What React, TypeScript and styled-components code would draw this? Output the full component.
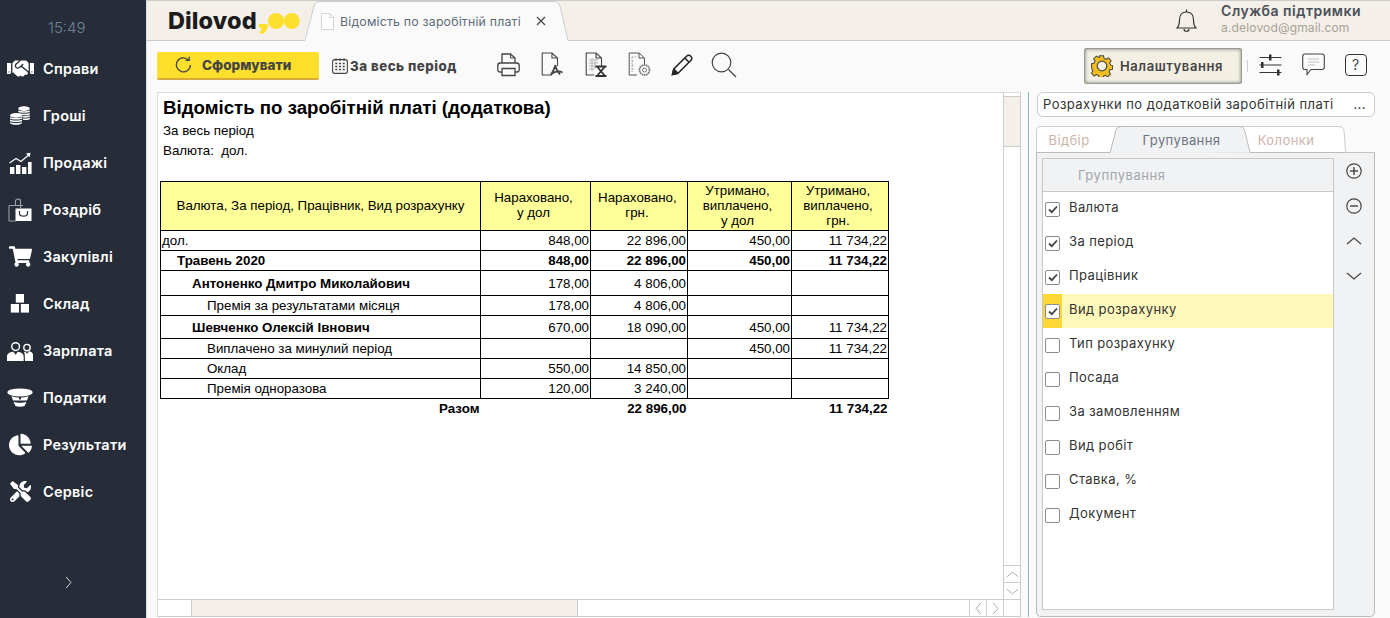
import React from 'react';
import styled, { createGlobalStyle } from 'styled-components';
import { FaHandshake, FaShoppingCart, FaChartPie, FaTools } from 'react-icons/fa';

const GlobalStyle = createGlobalStyle`
    html, body {
        margin: 0;
        padding: 0;
        height: 100%;
        overflow: hidden;
        background: #fafafa;
    }
    #root {
        height: 100%;
    }
    * {
        box-sizing: border-box;
    }
`;

const uiFont = `Inter, "Noto Sans", sans-serif`;
const docFont = `"Liberation Sans", Arial, sans-serif`;

const Page = styled.div`
    display: flex;
    height: 618px;
    width: 1390px;
    font-family: ${uiFont};
    overflow: hidden;
`;

/* sidebar */
const Sidebar = styled.nav`
    width: 146px;
    flex: none;
    background: #272d38;
    display: flex;
    flex-direction: column;
`;

const Clock = styled.div`
    height: 45px;
    padding: 19px 0 0 48px;
    font-size: 15px;
    line-height: 17px;
    font-weight: 300;
    color: #6d8298;
`;

const NavItem = styled.div`
    height: 47px;
    display: flex;
    align-items: center;
    color: #fff;
    font-size: 14.5px;
    font-weight: 600;
    letter-spacing: 0.25px;
`;

const NavIcon = styled.span`
    width: 43px;
    flex: none;
    display: flex;
    justify-content: center;
    padding-left: 2px;
    padding-right: 5px;
    font-size: 26px;
`;

const SideChevron = styled.div`
    margin-top: auto;
    height: 45px;
    padding-left: 62px;
    color: #d8dade;
`;

/* main column */
const Main = styled.div`
    flex: 1;
    min-width: 0;
    display: flex;
    flex-direction: column;
    border-left: 1px solid #ddd;
    background: #fafafa;
`;

const Header = styled.header`
    height: 41px;
    flex: none;
    display: flex;
    align-items: stretch;
    background: #f4efe9;
    border-top: 1px solid #ccc;
    border-bottom: 1px solid #ccc;
`;

const Logo = styled.div`
    width: 157px;
    flex: none;
    display: flex;
    align-items: center;
    padding-left: 21px;
`;

const LogoWord = styled.span`
    font-size: 23.5px;
    font-weight: 800;
    color: #1c1c1c;
    letter-spacing: 0.1px;
`;

const LogoSvg = styled.svg`
    flex: none;
    margin-left: 1px;
`;

const DocTab = styled.div`
    position: relative;
    width: 266px;
    flex: none;
    height: 40px;
    display: flex;
    align-items: center;
    padding-left: 17px;
    gap: 6px;
`;

const TabShape = styled.svg`
    position: absolute;
    left: 0;
    top: 0;
    pointer-events: none;
`;

const PageSvg = styled.svg`
    position: relative;
    flex: none;
`;

const DocTabTitle = styled.span`
    position: relative;
    width: 186px;
    overflow: hidden;
    white-space: nowrap;
    font-size: 12.3px;
    color: #5e6b78;
    letter-spacing: 0.2px;
`;

const DocTabClose = styled.span`
    position: relative;
    margin-left: 4px;
    display: flex;
`;

const Support = styled.div`
    margin-left: auto;
    display: flex;
    align-items: center;
    padding-right: 29px;
    gap: 24px;
`;

const SupportText = styled.div`
    display: flex;
    flex-direction: column;
    padding-bottom: 4px;
`;

const SupportName = styled.span`
    font-size: 14px;
    line-height: 18px;
    font-weight: 600;
    color: #4b4f57;
    letter-spacing: 0.5px;
`;

const SupportMail = styled.span`
    font-size: 12px;
    line-height: 15px;
    color: #a8a297;
    letter-spacing: 0.15px;
`;

/* toolbar */
const Toolbar = styled.div`
    height: 51px;
    flex: none;
    display: flex;
    align-items: center;
    padding: 0 14px 2px 10px;
`;

const RunButton = styled.button`
    width: 162px;
    height: 28px;
    flex: none;
    border: none;
    border-bottom: 2px solid #d7a83a;
    border-radius: 2px;
    background: #fddf2c;
    display: flex;
    align-items: center;
    padding: 0 0 0 18px;
    gap: 10px;
    font-family: ${uiFont};
    font-size: 13.5px;
    font-weight: 800;
    color: #444;
`;

const PeriodButton = styled.div`
    margin-left: 13px;
    width: 155px;
    flex: none;
    display: flex;
    align-items: center;
    gap: 2px;
    font-size: 13.3px;
    font-weight: 800;
    color: #444;
    letter-spacing: 0.5px;
`;

const ToolGroup = styled.div`
    display: flex;
    align-items: center;
`;

const ToolSlot = styled.span<{ $w: number }>`
    width: ${({ $w }) => $w}px;
    height: 30px;
    margin-bottom: 2px;
    display: flex;
    align-items: center;
    justify-content: center;
    flex: none;
`;

const SettingsButton = styled.button`
    margin-left: auto;
    margin-top: 1px;
    width: 158px;
    height: 36px;
    flex: none;
    border: none;
    border-radius: 3px;
    background: #f3efe3;
    box-shadow: inset 0 0 0 1px #9a9a94, inset 0 0 3px 2px #aaa9a2;
    display: flex;
    align-items: center;
    padding: 0 0 0 7px;
    gap: 7px;
    font-family: ${uiFont};
    font-size: 13px;
    font-weight: 600;
    color: #444;
    letter-spacing: 0.6px;
`;

const ToolSeparator = styled.span`
    width: 1px;
    height: 12px;
    margin-left: 5px;
    background: #ccc;
    flex: none;
`;

/* body */
const Body = styled.div`
    flex: 1;
    min-height: 0;
    display: flex;
    padding: 0 15px 1px 10px;
`;

const ReportFrame = styled.section`
    width: 864px;
    flex: none;
    display: grid;
    grid-template-columns: 1fr 17px;
    grid-template-rows: 1fr 17px;
    border: 1px solid #ccc;
    border-left-color: #ddd;
    border-top-color: #ddd;
    background: #fff;
`;

const Doc = styled.div`
    padding-top: 4px;
    font-family: ${docFont};
    color: #000;
    overflow: hidden;
`;

const DocTitle = styled.h1`
    margin: 0;
    padding-left: 5px;
    font-size: 18.67px;
    line-height: 22px;
    font-weight: 700;
`;

const DocLine = styled.div`
    padding-left: 5px;
    font-size: 13.33px;
    line-height: 20px;
    white-space: pre;
    &:first-of-type {
        margin-top: 2px;
    }
`;

const ReportTable = styled.table`
    margin: 20px 0 0 2px;
    width: 729px;
    table-layout: fixed;
    border-collapse: collapse;
    font-size: 13.33px;
    line-height: 15px;
`;

const HeadCell = styled.th`
    height: 49px;
    padding: 0 8px 2px;
    background: #ffff99;
    border: 1px solid #000;
    font-weight: 400;
    text-align: center;
    vertical-align: middle;
    &:not(:first-child) {
        padding: 0 11px 2px 7px;
    }
`;

const Row = styled.tr<{ $h: number }>`
    height: ${({ $h }) => $h}px;
`;

const NameCell = styled.td<{ $level: number; $bold?: boolean }>`
    padding: 0 1px 0 ${({ $level }) => 1 + $level * 15}px;
    border: 1px solid #000;
    font-weight: ${({ $bold }) => ($bold ? 700 : 400)};
    white-space: nowrap;
`;

const NumCell = styled.td<{ $bold?: boolean }>`
    padding: 0 1px;
    border: 1px solid #000;
    text-align: right;
    font-weight: ${({ $bold }) => ($bold ? 700 : 400)};
    white-space: nowrap;
`;

const TotalCell = styled.td`
    height: 20px;
    padding: 0 1px;
    text-align: right;
    font-weight: 700;
    border: none;
`;

const VScroll = styled.div`
    display: flex;
    flex-direction: column;
    border-left: 1px solid #ccc;
    background: #fff;
`;

const VThumb = styled.div`
    margin-top: 3px;
    height: 51px;
    background: #f4efe9;
    border-top: 1px solid #ccc;
    border-bottom: 1px solid #ccc;
`;

const ScrollBtn = styled.div`
    height: 17px;
    display: flex;
    align-items: center;
    justify-content: center;
    border-top: 1px solid #ccc;
    color: #aaa;
`;

const VSpacer = styled.div`
    flex: 1;
`;

const HScroll = styled.div`
    display: flex;
    border-top: 1px solid #ccc;
    background: #fff;
`;

const HTrackStart = styled.div`
    width: 34px;
    flex: none;
    border-right: 1px solid #ccc;
`;

const HThumb = styled.div`
    width: 386px;
    flex: none;
    background: #f4efe9;
    border-right: 1px solid #ccc;
`;

const HTrackEnd = styled.div`
    flex: 1;
`;

const HBtn = styled.div`
    width: 17px;
    flex: none;
    display: flex;
    align-items: center;
    justify-content: center;
    border-left: 1px solid #ccc;
    color: #aaa;
`;

const Corner = styled.div`
    border-left: 1px solid #ccc;
    border-top: 1px solid #ccc;
`;

const Splitter = styled.div`
    width: 1px;
    flex: none;
    margin: 0 7px 0 7px;
    background: #8fb4bc;
`;

/* right panel */
const Panel = styled.aside`
    flex: 1;
    min-width: 0;
    display: flex;
    flex-direction: column;
`;

const Lookup = styled.div`
    height: 25px;
    flex: none;
    margin-left: 1px;
    display: flex;
    align-items: center;
    justify-content: space-between;
    padding: 0 8px 2px 5px;
    border: 1px solid #ccc;
    border-radius: 6px;
    background: #fff;
    font-size: 13px;
    color: #333;
    letter-spacing: 0.45px;
`;

const TabStrip = styled.div`
    position: relative;
    height: 26px;
    margin-top: 9px;
    flex: none;
    display: flex;
    font-size: 13px;
    letter-spacing: 0.4px;
`;

const PanelTab = styled.div<{ $w: number; $active?: boolean }>`
    position: relative;
    width: ${({ $w }) => $w}px;
    display: flex;
    align-items: center;
    justify-content: center;
    padding-top: 1px;
    color: ${({ $active }) => ($active ? '#6b7480' : '#cdb5ab')};
`;

const PanelBox = styled.div`
    flex: 1;
    min-height: 0;
    display: flex;
    gap: 0;
    padding: 5px 0 6px 5px;
    background: #f1f2f4;
    border: 1px solid #bbb;
    border-top: 1px solid #c4c4c4;
    border-radius: 0 0 5px 5px;
`;

const GroupList = styled.div`
    width: 292px;
    flex: none;
    display: flex;
    flex-direction: column;
    background: #fff;
    border: 1px solid #c8c8c8;
`;

const ListHead = styled.div`
    height: 33px;
    flex: none;
    padding-left: 35px;
    display: flex;
    align-items: center;
    background: #f1f2f4;
    border-bottom: 1px solid #c8c8c8;
    font-size: 13px;
    color: #a3a6ab;
    letter-spacing: 0.55px;
`;

const ListRow = styled.label<{ $selected?: boolean }>`
    height: 34px;
    flex: none;
    display: flex;
    align-items: center;
    background: ${({ $selected }) => ($selected ? '#fff8bb' : 'transparent')};
    font-size: 13px;
    color: #333;
    letter-spacing: 0.4px;
`;

const CheckCell = styled.span<{ $selected?: boolean }>`
    width: 19px;
    height: 100%;
    flex: none;
    display: flex;
    align-items: center;
    justify-content: center;
    margin-right: 7px;
    background: ${({ $selected }) => ($selected ? '#fdd835' : 'transparent')};
`;

const Check = styled.span`
    width: 15px;
    height: 15px;
    display: flex;
    align-items: center;
    justify-content: center;
    background: #fff;
    border: 1px solid #8c8c8c;
    border-radius: 2px;
`;

const RowLabel = styled.span`
    padding-bottom: 5px;
`;

const SideActions = styled.div`
    flex: 1;
    display: flex;
    flex-direction: column;
    align-items: center;
`;

const SideAction = styled.span`
    height: 35px;
    flex: none;
    display: flex;
    align-items: center;
    justify-content: center;
    &:first-child {
        margin-top: -5px;
    }
`;

/* drawings */
const CoinsIcon = () => (
    <svg width="22" height="19" viewBox="0 0 22 19" fill="#fff">
        <g>
            <ellipse cx="15" cy="2.6" rx="5.8" ry="2.4" />
            <path d="M9.2 4.2c1 1.4 10.6 1.4 11.6 0v1.5c-.6 1.4-10.8 1.4-11.6 0zM9.2 6.7c1 1.4 10.6 1.4 11.6 0v1.5c-.6 1.4-10.8 1.4-11.6 0zM12 10c3 .5 7.5 0 8.8-.9v1.5c-.5 1-4 1.4-7 1zM13.5 12.4c3 .3 6.3-.1 7.3-.9V13c-.5 1-3.5 1.3-6.5 1z" />
            <ellipse cx="7" cy="9.4" rx="6" ry="2.4" />
            <path d="M1 11c1 1.4 11 1.4 12 0v1.4c-.6 1.4-11.4 1.4-12 0zM1 13.5c1 1.4 11 1.4 12 0v1.4c-.6 1.4-11.4 1.4-12 0zM1 16c1 1.4 11 1.4 12 0v.8c-.6 2.7-11.4 2.7-12 0z" />
        </g>
    </svg>
);

const ChartIcon = () => (
    <svg width="23" height="22" viewBox="0 0 23 22" fill="#fff">
        <rect x="1" y="15" width="4.4" height="7" />
        <rect x="7" y="13" width="4.4" height="9" />
        <rect x="13" y="15" width="4.4" height="7" />
        <rect x="19" y="10" width="3.6" height="12" />
        <path d="M0.5 11 L7 6.5 L12 9.5 L19 3.5" fill="none" stroke="#fff" strokeWidth="1.2" />
        <path d="M17 1.5 L21.5 0.8 L20.6 5.2 Z" />
    </svg>
);

const BagIcon = () => (
    <svg width="24" height="24" viewBox="0 0 24 24" fill="none">
        <path d="M1 7.5 H15 M1 7.5 V23 H8 M7.5 7.5 V3 C7.5 .5 12.5 .5 12.5 3 V10" stroke="#9aa0a8" strokeWidth="1.1" />
        <rect x="7.5" y="10.5" width="16" height="12.5" fill="#fff" />
        <path d="M11.5 13 V15.5 C11.5 19 19.5 19 19.5 15.5 V13" stroke="#272d38" strokeWidth="1.2" />
    </svg>
);

const BoxesIcon = () => (
    <svg width="20" height="21" viewBox="0 0 20 21" fill="#fff">
        <rect x="5.8" y="1" width="8.2" height="8.6" />
        <rect x="0.8" y="11" width="8.2" height="8.6" />
        <rect x="10.8" y="11" width="8.2" height="8.6" />
    </svg>
);

const PeopleIcon = () => (
    <svg width="26" height="20" viewBox="0 0 26 20" fill="none" stroke="#fff" strokeWidth="1.4">
        <circle cx="8.6" cy="5.6" r="3.9" />
        <circle cx="20" cy="6.6" r="3.2" />
        <path d="M.5 19.5 V16 C.5 13 3 12 6 11.5 L8.6 15 L11.2 11.5 C14 12 16 13 16 16 V19.5 Z" fill="#fff" />
        <path d="M17.6 11 L20 14 L22.4 11 C24.5 11.5 25.5 13 25.5 15 V19.5 H18" fill="#fff" />
    </svg>
);

const CapIcon = () => (
    <svg width="26" height="19" viewBox="0 0 26 19" fill="#fff">
        <ellipse cx="13" cy="4.4" rx="12.6" ry="4" />
        <path d="M4.5 8 C9 10 17 10 21.5 8 L20 12.5 H6 Z" />
        <path d="M6.5 14 C10 15 16 15 19.5 14 L17.5 18 C15 19 11 19 8.5 18 Z" />
        <rect x="12" y="8.8" width="2" height="2.6" fill="#272d38" />
    </svg>
);

const LogoMarks = () => (
    <LogoSvg width="42" height="26" viewBox="0 0 42 26">
        <path d="M1 16 h9 c0 5 -2 8.5 -6 10 l-3-1.5 c1.5-1 2.5-2.5 2.6-4 C1.5 20 0 18 1 16z" fill="#fde02e" />
        <circle cx="18" cy="13" r="8" fill="#fde02e" />
        <circle cx="33.7" cy="13" r="8" fill="#fde02e" />
    </LogoSvg>
);

const PageIcon = () => (
    <PageSvg width="13" height="17" viewBox="0 0 13 17" fill="#fff" stroke="#ccc" strokeWidth="0.8">
        <path d="M.5 .5 H8.5 L12.5 4.5 V16.5 H.5 Z" />
        <path d="M8.5 .5 V4.5 H12.5" fill="none" />
    </PageSvg>
);

const CloseIcon = () => (
    <svg width="10" height="10" viewBox="0 0 10 10" stroke="#444" strokeWidth="1.2">
        <path d="M1 1 L9 9 M9 1 L1 9" />
    </svg>
);

const BellIcon = () => (
    <svg width="21" height="25" viewBox="0 0 21 25" fill="none" stroke="#333" strokeWidth="1.2">
        <path d="M1 20 C3 18 3.5 16 3.5 12 C3.5 7 6 4 10.5 4 C15 4 17.5 7 17.5 12 C17.5 16 18 18 20 20 Z" />
        <path d="M10.5 4 V1.5 M8 21 C8 24 13 24 13 21" />
    </svg>
);

const RefreshIcon = () => (
    <svg width="17" height="17" viewBox="0 0 17 17" fill="none" stroke="#444" strokeWidth="1.3">
        <path d="M13.6 4.2 A7 7 0 1 0 15.4 9" />
        <path d="M10.5 4.4 H14.2 V.8" />
    </svg>
);

const CalendarIcon = () => (
    <svg width="16" height="16" viewBox="0 0 16 16" fill="none" stroke="#444">
        <rect x=".6" y="1.6" width="14.8" height="13.8" rx="2.2" strokeWidth="1.1" />
        <path d="M4 .2 V3 M8 .2 V3 M12 .2 V3" strokeWidth="1" />
        <path d="M3.3 5.5 h2 M7 5.5 h2 M10.7 5.5 h2 M3.3 8.5 h2 M7 8.5 h2 M10.7 8.5 h2 M3.3 11.5 h2 M7 11.5 h2 M10.7 11.5 h2" strokeWidth="1.7" />
    </svg>
);

const PrinterIcon = () => (
    <svg width="23" height="24" viewBox="0 0 23 24" fill="none" stroke="#444" strokeWidth="1.3">
        <path d="M5 10 V1 H13.5 L18 5 V10" />
        <path d="M13.5 1 V5 H18" strokeWidth="1" />
        <path d="M5 19 H3 C1.5 19 .8 18 .8 16.5 V12.5 C.8 11 1.8 10 3.2 10 H19.8 C21.2 10 22.2 11 22.2 12.5 V16.5 C22.2 18 21.5 19 20 19 H18" />
        <path d="M5 15.5 H18 V22.5 H5 Z" />
    </svg>
);

const FileOutline = () => (
    <path d="M9 23 H1.2 V1 H11 L16.5 6 V14 M11 1 V6 H16.5" fill="none" stroke="#444" strokeWidth="1.1" />
);

const PdfIcon = () => (
    <svg width="23" height="25" viewBox="0 0 23 25">
        <FileOutline />
        <path d="M14.5 13 C13.6 16 12 20 9.5 23.5 M10.5 22 C13 19.5 18 18.5 21.5 20.5 M14.5 13 C14.5 17 17 20 19 22.5" fill="none" stroke="#444" strokeWidth="1.8" />
    </svg>
);

const XlsIcon = () => (
    <svg width="23" height="25" viewBox="0 0 23 25">
        <FileOutline />
        <path d="M4 8 H13 M4 11 H13 M4 14 H11 M4 17 H9 M7 6 V19 M10 8 V17" stroke="#c6c6c6" strokeWidth="1.4" fill="none" />
        <path d="M10.5 14.5 H21.5 M10.5 24 H21.5 M12 14.5 L20 24 M20 14.5 L12 24" stroke="#333" strokeWidth="1.8" fill="none" />
    </svg>
);

const GearFileIcon = () => (
    <svg width="23" height="25" viewBox="0 0 23 25" fill="none">
        <path d="M9 23 H1.2 V1 H11 L16.5 6 V12 M11 1 V6 H16.5" stroke="#555" strokeWidth="1" />
        <path d="M4 5 V20 M4 5 H9 M4 9 H6 M4 13 H6 M4 17 H6" stroke="#999" strokeWidth="1" strokeDasharray="1.4 1.4" />
        <circle cx="16.5" cy="18" r="5" stroke="#777" strokeWidth="1.8" strokeDasharray="1.6 .6" />
        <circle cx="16.5" cy="18" r="2" stroke="#777" strokeWidth="1" />
    </svg>
);

const PencilIcon = () => (
    <svg width="22" height="22" viewBox="0 0 22 22" fill="none" stroke="#222" strokeWidth="1.5">
        <path d="M1.5 20.5 L2.8 15 L15.8 2 C17 .8 18.6 1 19.8 2.2 C21 3.4 21.2 5 20 6.2 L7 19.2 Z" />
        <path d="M13.8 4 L18 8.2 M2.8 15 L7 19.2" />
        <path d="M1.5 20.5 L2.5 16.5 L5.5 19.5 Z" fill="#222" />
    </svg>
);

const SearchIcon = () => (
    <svg width="26" height="26" viewBox="0 0 26 26" fill="none" stroke="#444" strokeWidth="1.2">
        <circle cx="10.5" cy="10.5" r="9.3" />
        <path d="M17.5 17.5 L25 25" />
    </svg>
);

const GearIcon = () => (
    <svg width="22" height="22" viewBox="0 0 22 22">
        <path
            d="M9 .8 h4 l.6 2.8 2 .9 2.5-1.5 2.8 2.8-1.5 2.5 .9 2 2.2 .7 v3.9 l-2.8 .5 -.9 2 1.5 2.5 -2.8 2.8 -2.5-1.5 -2 .9 -.6 1.8 h-4 l-.6-2.6 -2-.9 -2.5 1.5 -2.8-2.8 1.5-2.5 -.9-2 L.6 13 V9 l2.8-.6 .9-2 L2.8 3.9 5.6 1.1 8.1 2.6 l1-.4z"
            fill="#f3bd24"
            stroke="#4a4a40"
            strokeWidth="1.1"
            transform="scale(.96)"
        />
        <circle cx="11" cy="11" r="4.8" fill="#f3efe3" stroke="#4a4a40" strokeWidth="1.2" />
    </svg>
);

const SlidersIcon = () => (
    <svg width="23" height="22" viewBox="0 0 23 22" stroke="#333" fill="#333">
        <path d="M.5 3.5 H22.5 M.5 11 H22.5 M.5 18.5 H22.5" strokeWidth="1.2" />
        <rect x="10" y=".5" width="2.5" height="6" stroke="none" />
        <rect x="2" y="8" width="2.5" height="6" stroke="none" />
        <rect x="18" y="15.5" width="2.5" height="6" stroke="none" />
    </svg>
);

const ChatIcon = () => (
    <svg width="23" height="23" viewBox="0 0 23 23" fill="none">
        <path d="M3 1 H20 C21.5 1 22.3 2 22.3 3.5 V14 C22.3 15.5 21.5 16.5 20 16.5 H9 L5 21.5 V16.5 H3 C1.5 16.5 .7 15.5 .7 14 V3.5 C.7 2 1.5 1 3 1 Z" stroke="#444" strokeWidth="1.1" />
        <path d="M6 6 H17 M6 9 H17 M6 12 H13" stroke="#c4c4c4" strokeWidth="1" />
    </svg>
);

const HelpBox = styled.span`
    width: 22px;
    height: 22px;
    display: flex;
    align-items: center;
    justify-content: center;
    border: 1.2px solid #333;
    border-radius: 4px;
    font-size: 14px;
    color: #444;
`;

const CheckMark = () => (
    <svg width="10" height="9" viewBox="0 0 10 9" fill="none" stroke="#444" strokeWidth="1.8">
        <path d="M1 4.5 L3.8 7.2 L9 1.5" />
    </svg>
);

const CircleAction = ({ plus }: { plus?: boolean }) => (
    <svg width="16" height="16" viewBox="0 0 16 16" fill="none" stroke="#444" strokeWidth="1.2">
        <circle cx="8" cy="8" r="7.2" />
        <path d="M4 8 H12" strokeWidth="1.4" />
        {plus && <path d="M8 4 V12" strokeWidth="1.4" />}
    </svg>
);

const Chevron = ({ dir, size = 16, color = '#444' }: { dir: 'up' | 'down' | 'left' | 'right'; size?: number; color?: string }) => {
    const paths = {
        up: 'M1 11 L8 5 L15 11',
        down: 'M1 5 L8 11 L15 5',
        left: 'M11 1 L5 8 L11 15',
        right: 'M5 1 L11 8 L5 15',
    };
    return (
        <svg width={size} height={size} viewBox="0 0 16 16" fill="none" stroke={color} strokeWidth="1.2">
            <path d={paths[dir]} />
        </svg>
    );
};

const navItems = [
    { label: 'Справи', icon: <FaHandshake size={27} /> },
    { label: 'Гроші', icon: <CoinsIcon /> },
    { label: 'Продажі', icon: <ChartIcon /> },
    { label: 'Роздріб', icon: <BagIcon /> },
    { label: 'Закупівлі', icon: <FaShoppingCart size={23} /> },
    { label: 'Склад', icon: <BoxesIcon /> },
    { label: 'Зарплата', icon: <PeopleIcon /> },
    { label: 'Податки', icon: <CapIcon /> },
    { label: 'Результати', icon: <FaChartPie size={23} /> },
    { label: 'Сервіс', icon: <FaTools size={21} /> },
];

interface ReportRow {
    name: string;
    level: number;
    bold?: boolean;
    boldValues?: boolean;
    height: number;
    values: string[];
}

const reportRows: ReportRow[] = [
    { name: 'дол.', level: 0, height: 20, values: ['848,00', '22 896,00', '450,00', '11 734,22'] },
    { name: 'Травень 2020', level: 1, bold: true, boldValues: true, height: 20, values: ['848,00', '22 896,00', '450,00', '11 734,22'] },
    { name: 'Антоненко Дмитро Миколайович', level: 2, bold: true, height: 25, values: ['178,00', '4 806,00', '', ''] },
    { name: 'Премія за результатами місяця', level: 3, height: 20, values: ['178,00', '4 806,00', '', ''] },
    { name: 'Шевченко Олексій Івнович', level: 2, bold: true, height: 23, values: ['670,00', '18 090,00', '450,00', '11 734,22'] },
    { name: 'Виплачено за минулий період', level: 3, height: 20, values: ['', '', '450,00', '11 734,22'] },
    { name: 'Оклад', level: 3, height: 20, values: ['550,00', '14 850,00', '', ''] },
    { name: 'Премія одноразова', level: 3, height: 20, values: ['120,00', '3 240,00', '', ''] },
];

const groupRows = [
    { label: 'Валюта', checked: true },
    { label: 'За період', checked: true },
    { label: 'Працівник', checked: true },
    { label: 'Вид розрахунку', checked: true, selected: true },
    { label: 'Тип розрахунку' },
    { label: 'Посада' },
    { label: 'За замовленням' },
    { label: 'Вид робіт' },
    { label: 'Ставка, %' },
    { label: 'Документ' },
];

const App: React.FC = () => {
    return (
        <Page>
            <GlobalStyle />
            <Sidebar>
                <Clock>15:49</Clock>
                {navItems.map((item) => (
                    <NavItem key={item.label}>
                        <NavIcon>{item.icon}</NavIcon>
                        {item.label}
                    </NavItem>
                ))}
                <SideChevron>
                    <Chevron dir="right" size={13} color="#d8dade" />
                </SideChevron>
            </Sidebar>

            <Main>
                <Header>
                    <Logo>
                        <LogoWord>Dilovod</LogoWord>
                        <LogoMarks />
                    </Logo>
                    <DocTab>
                        <TabShape width="266" height="40" viewBox="0 0 266 40">
                            <path d="M0 40 L10 5 Q11 0 16 0 H250 Q255 0 256 5 L264 39.5 H266 V40 Z" fill="#fafafa" />
                            <path d="M0 39.5 H1 L10 5 Q11 .5 16 .5 H250 Q255 .5 256 5 L264 39.5 H266" fill="none" stroke="#ccc" />
                        </TabShape>
                        <PageIcon />
                        <DocTabTitle>Відомість по заробітній платі</DocTabTitle>
                        <DocTabClose><CloseIcon /></DocTabClose>
                    </DocTab>
                    <Support>
                        <BellIcon />
                        <SupportText>
                            <SupportName>Служба підтримки</SupportName>
                            <SupportMail>a.delovod@gmail.com</SupportMail>
                        </SupportText>
                    </Support>
                </Header>

                <Toolbar>
                    <RunButton>
                        <RefreshIcon />
                        Сформувати
                    </RunButton>
                    <PeriodButton>
                        <CalendarIcon />
                        За весь період
                    </PeriodButton>
                    <ToolGroup>
                        <ToolSlot $w={43}><PrinterIcon /></ToolSlot>
                        <ToolSlot $w={44}><PdfIcon /></ToolSlot>
                        <ToolSlot $w={44}><XlsIcon /></ToolSlot>
                        <ToolSlot $w={43}><GearFileIcon /></ToolSlot>
                        <ToolSlot $w={41}><PencilIcon /></ToolSlot>
                        <ToolSlot $w={43}><SearchIcon /></ToolSlot>
                    </ToolGroup>
                    <SettingsButton>
                        <GearIcon />
                        Налаштування
                    </SettingsButton>
                    <ToolSeparator />
                    <ToolSlot $w={44}><SlidersIcon /></ToolSlot>
                    <ToolSlot $w={43}><ChatIcon /></ToolSlot>
                    <ToolSlot $w={41}><HelpBox>?</HelpBox></ToolSlot>
                </Toolbar>

                <Body>
                    <ReportFrame>
                        <Doc>
                            <DocTitle>Відомість по заробітній платі (додаткова)</DocTitle>
                            <DocLine>За весь період</DocLine>
                            <DocLine>Валюта:  дол.</DocLine>
                            <ReportTable>
                                <colgroup>
                                    <col width="320" />
                                    <col width="110" />
                                    <col width="97" />
                                    <col width="104" />
                                    <col width="97" />
                                </colgroup>
                                <thead>
                                    <tr>
                                        <HeadCell>Валюта, За період, Працівник, Вид розрахунку</HeadCell>
                                        <HeadCell>Нараховано,<br />у дол</HeadCell>
                                        <HeadCell>Нараховано,<br />грн.</HeadCell>
                                        <HeadCell>Утримано,<br />виплачено,<br />у дол</HeadCell>
                                        <HeadCell>Утримано,<br />виплачено,<br />грн.</HeadCell>
                                    </tr>
                                </thead>
                                <tbody>
                                    {reportRows.map((row) => (
                                        <Row key={row.name} $h={row.height}>
                                            <NameCell $level={row.level} $bold={row.bold}>{row.name}</NameCell>
                                            {row.values.map((v, i) => (
                                                <NumCell key={i} $bold={row.boldValues}>{v}</NumCell>
                                            ))}
                                        </Row>
                                    ))}
                                    <tr>
                                        <TotalCell>Разом</TotalCell>
                                        <TotalCell />
                                        <TotalCell>22 896,00</TotalCell>
                                        <TotalCell />
                                        <TotalCell>11 734,22</TotalCell>
                                    </tr>
                                </tbody>
                            </ReportTable>
                        </Doc>
                        <VScroll>
                            <VThumb />
                            <VSpacer />
                            <ScrollBtn><Chevron dir="up" size={13} color="#aaa" /></ScrollBtn>
                            <ScrollBtn><Chevron dir="down" size={13} color="#aaa" /></ScrollBtn>
                        </VScroll>
                        <HScroll>
                            <HTrackStart />
                            <HThumb />
                            <HTrackEnd />
                            <HBtn><Chevron dir="left" size={13} color="#aaa" /></HBtn>
                            <HBtn><Chevron dir="right" size={13} color="#aaa" /></HBtn>
                        </HScroll>
                        <Corner />
                    </ReportFrame>

                    <Splitter />

                    <Panel>
                        <Lookup>
                            <span>Розрахунки по додатковій заробітній платі</span>
                            <span>...</span>
                        </Lookup>
                        <TabStrip>
                            <TabShape width="310" height="27" viewBox="0 0 310 27">
                                <path d="M.5 27 V5 Q.5 .5 5 .5 H303 Q307 .5 308 4 L309.5 26" fill="#fff" stroke="#ccc" />
                                <path d="M74 27 L80 4 Q81 .5 85 .5 H204 Q207 .5 208.5 4 L214 26.5" fill="#f1f2f4" stroke="#bbb" />
                                <path d="M.5 26.5 H74 M214 26.5 H309" stroke="#bbb" fill="none" />
                            </TabShape>
                            <PanelTab $w={66}>Відбір</PanelTab>
                            <PanelTab $w={159} $active>Групування</PanelTab>
                            <PanelTab $w={50}>Колонки</PanelTab>
                        </TabStrip>
                        <PanelBox>
                            <GroupList>
                                <ListHead>Группування</ListHead>
                                {groupRows.map((row) => (
                                    <ListRow key={row.label} $selected={row.selected}>
                                        <CheckCell $selected={row.selected}>
                                            <Check>{row.checked && <CheckMark />}</Check>
                                        </CheckCell>
                                        <RowLabel>{row.label}</RowLabel>
                                    </ListRow>
                                ))}
                            </GroupList>
                            <SideActions>
                                <SideAction><CircleAction plus /></SideAction>
                                <SideAction><CircleAction /></SideAction>
                                <SideAction><Chevron dir="up" /></SideAction>
                                <SideAction><Chevron dir="down" /></SideAction>
                            </SideActions>
                        </PanelBox>
                    </Panel>
                </Body>
            </Main>
        </Page>
    );
};

export default App;
